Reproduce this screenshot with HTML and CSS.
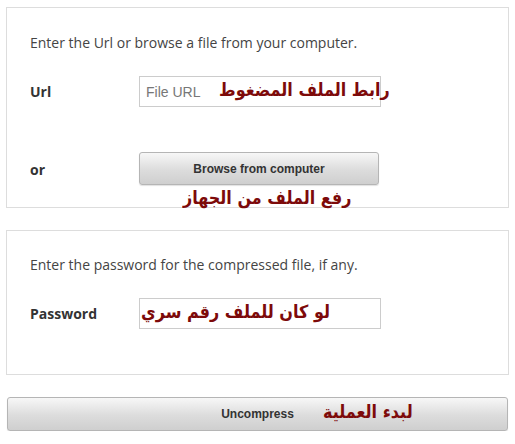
FILE: index.html
```html
<!DOCTYPE html>
<html lang="en">
<head>
<meta charset="utf-8">
<title>Uncompress</title>
<link rel="stylesheet" href="styles.css">
</head>
<body>
<div class="page">
  <section class="panel panel-source">
    <p class="intro">Enter the Url or browse a file from your computer.</p>
    <div class="rows">
      <label class="label" for="url">Url</label>
      <div class="field">
        <input class="text-input" id="url" type="text" placeholder="File URL">
        <span class="note note-url" dir="rtl">رابط الملف المضغوط</span>
      </div>
      <span class="label label-or">or</span>
      <div class="field">
        <button class="btn btn-browse" type="button">Browse from computer</button>
        <span class="note note-browse" dir="rtl">رفع الملف من الجهاز</span>
      </div>
    </div>
  </section>

  <section class="panel panel-password">
    <p class="intro">Enter the password for the compressed file, if any.</p>
    <div class="rows">
      <label class="label" for="pw">Password</label>
      <div class="field">
        <input class="text-input" id="pw" type="password">
        <span class="note note-pw" dir="rtl">لو كان للملف رقم سري</span>
      </div>
    </div>
  </section>

  <div class="submit">
    <button class="btn btn-go" type="button">Uncompress</button>
    <span class="note note-go" dir="rtl">لبدء العملية</span>
  </div>
</div>
</body>
</html>
```

FILE: styles.css
```css
* { box-sizing: border-box; }

html, body {
  margin: 0;
  padding: 0;
  background: #ffffff;
}

.page {
  padding: 7px 6px 0 6px;
  display: flex;
  flex-direction: column;
  font-family: "Open Sans", "Liberation Sans", sans-serif;
  color: #444;
}

.panel {
  border: 1px solid #dddddd;
  padding: 0 0 0 23px;
}

.panel-source {
  height: 201px;
  padding-top: 25px;
}

.panel-password {
  margin-top: 22px;
  height: 145px;
  padding-top: 24px;
}

.intro {
  margin: 0;
  font-size: 14px;
  line-height: 20px;
  color: #444;
}

.rows {
  display: grid;
  grid-template-columns: 109px 242px;
  align-items: center;
  row-gap: 45px;
  margin-top: 23px;
}

.label {
  font-size: 14px;
  font-weight: 700;
  color: #333;
  line-height: 20px;
}

.label-or {
  position: relative;
  top: 1px;
}

.field {
  position: relative;
  display: flex;
}

.text-input {
  width: 242px;
  height: 31px;
  margin: 0;
  border: 1px solid #cccccc;
  border-radius: 0;
  padding: 0 6px;
  font-family: "Liberation Sans", Arial, sans-serif;
  font-size: 14px;
  color: #333;
  background: #fff;
  outline: none;
}

.text-input::placeholder {
  color: #777;
}

.btn {
  margin: 0;
  border: 1px solid #b5b5b5;
  border-radius: 3px;
  background: linear-gradient(#f7f7f7, #dcdcdc 55%, #cfcfcf);
  font-family: "Liberation Sans", Arial, sans-serif;
  font-size: 12px;
  font-weight: 700;
  color: #333;
  box-shadow: 0 1px 1px rgba(0,0,0,0.12);
}

.btn-browse {
  width: 240px;
  height: 33px;
}

.submit {
  position: relative;
  margin: 22px 1px 0 1px;
  display: flex;
}

.btn-go {
  width: 100%;
  height: 34px;
}

.note {
  position: absolute;
  font-family: "DejaVu Sans", "Noto Sans", sans-serif;
  font-weight: 700;
  font-size: 18px;
  line-height: 24px;
  color: #7d0a0a;
  white-space: nowrap;
  pointer-events: none;
  transform: scaleX(0.89);
  transform-origin: left center;
}

.note-url {
  right: -9px;
  top: 2px;
  transform-origin: right center;
}

.note-browse {
  left: 44px;
  top: 100%;
  margin-top: 1px;
}

.note-pw {
  left: 2px;
  top: 2px;
}

.note-go {
  left: 316px;
  top: 3px;
}
```
